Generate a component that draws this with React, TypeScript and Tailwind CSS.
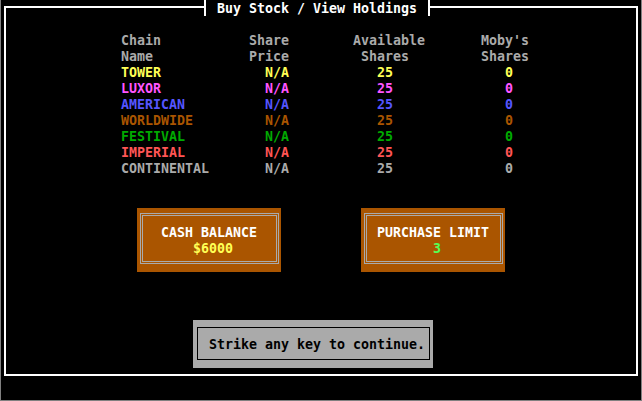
import React from "react";

const rows = [
  { name: "TOWER", color: "text-[#FFFF55]" },
  { name: "LUXOR", color: "text-[#FF55FF]" },
  { name: "AMERICAN", color: "text-[#5555FF]" },
  { name: "WORLDWIDE", color: "text-[#AA5500]" },
  { name: "FESTIVAL", color: "text-[#00AA00]" },
  { name: "IMPERIAL", color: "text-[#FF5555]" },
  { name: "CONTINENTAL", color: "text-[#AAAAAA]" },
];

const font = { fontFamily: '"DejaVu Sans Mono", "Liberation Mono", monospace' };

export default function App() {
  return (
    <div
      className="w-[642px] h-[401px] bg-black border-l border-r border-b border-[#808080] text-[13.29px] font-bold whitespace-pre overflow-hidden"
      style={font}
    >
      <div className="relative mt-[6px] ml-[3px] w-[634px] h-[370px] border-2 border-white">
        {/* title legend */}
        <div className="absolute left-[198px] top-[-8px] h-4 flex">
          <div className="w-[2px] h-4 bg-white" />
          <div className="w-[222px] h-4 bg-black pl-[11px] leading-[17px] text-white">
            Buy Stock / View Holdings
          </div>
          <div className="w-[2px] h-4 bg-white" />
        </div>

        {/* table */}
        <div className="ml-[115px] mt-[24px] grid grid-cols-[128px_104px_128px_64px] auto-rows-[16px] leading-[18px] text-[#AAAAAA]">
          <div>Chain</div>
          <div>Share</div>
          <div>Available</div>
          <div>Moby's</div>
          <div>Name</div>
          <div>Price</div>
          <div className="pl-[8px]">Shares</div>
          <div>Shares</div>
          {rows.map((r) => (
            <React.Fragment key={r.name}>
              <div className={r.color}>{r.name}</div>
              <div className={`pl-[16px] ${r.color}`}>N/A</div>
              <div className={`pl-[24px] ${r.color}`}>25</div>
              <div className={`pl-[24px] ${r.color}`}>0</div>
            </React.Fragment>
          ))}
        </div>

        {/* info boxes */}
        <div className="mt-8 ml-[131px] flex gap-[80px]">
          <div className="w-[144px] h-[64px] bg-[#AA5500] pt-[5px] pl-[3px]">
            <div className="w-[139px] h-[51px] border-[3px] border-double border-[#AAAAAA] pt-2 leading-[17px]">
              <div className="h-4 pl-[18px] text-white">CASH BALANCE</div>
              <div className="h-4 pl-[50px] text-[#FFFF55]">$6000</div>
            </div>
          </div>
          <div className="w-[144px] h-[64px] bg-[#AA5500] pt-[5px] pl-[3px]">
            <div className="w-[139px] h-[51px] border-[3px] border-double border-[#AAAAAA] pt-2 leading-[17px]">
              <div className="h-4 pl-[10px] text-white">PURCHASE LIMIT</div>
              <div className="h-4 pl-[66px] text-[#55FF55]">3</div>
            </div>
          </div>
        </div>

        {/* prompt */}
        <div className="mt-12 ml-[187px] w-[240px] h-[48px] bg-[#AAAAAA] pt-[7px] pl-[4px]">
          <div className="w-[233px] h-[33px] border border-black pt-2 pl-[11px] leading-[17px] text-black">
            Strike any key to continue.
          </div>
        </div>
      </div>
    </div>
  );
}
